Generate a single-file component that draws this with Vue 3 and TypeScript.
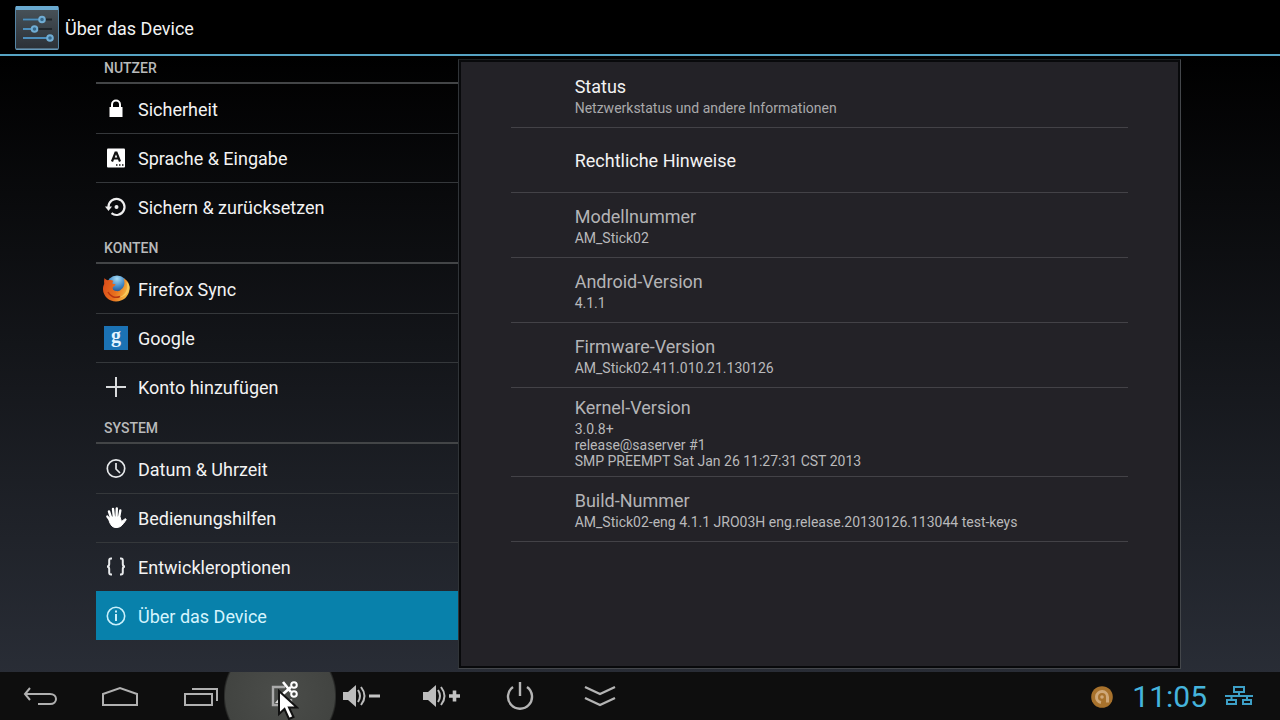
<script setup lang="ts">
import { ref } from 'vue'

interface Entry {
  id: string
  label: string
}

interface Section {
  title: string
  entries: Entry[]
}

interface Detail {
  title: string
  lines: string[]
  readonly: boolean
}

const sections: Section[] = [
  {
    title: 'NUTZER',
    entries: [
      { id: 'lock', label: 'Sicherheit' },
      { id: 'language', label: 'Sprache & Eingabe' },
      { id: 'backup', label: 'Sichern & zurücksetzen' },
    ],
  },
  {
    title: 'KONTEN',
    entries: [
      { id: 'firefox', label: 'Firefox Sync' },
      { id: 'google', label: 'Google' },
      { id: 'add', label: 'Konto hinzufügen' },
    ],
  },
  {
    title: 'SYSTEM',
    entries: [
      { id: 'clock', label: 'Datum & Uhrzeit' },
      { id: 'hand', label: 'Bedienungshilfen' },
      { id: 'braces', label: 'Entwickleroptionen' },
      { id: 'info', label: 'Über das Device' },
    ],
  },
]

const details: Detail[] = [
  { title: 'Status', lines: ['Netzwerkstatus und andere Informationen'], readonly: false },
  { title: 'Rechtliche Hinweise', lines: [], readonly: false },
  { title: 'Modellnummer', lines: ['AM_Stick02'], readonly: true },
  { title: 'Android-Version', lines: ['4.1.1'], readonly: true },
  { title: 'Firmware-Version', lines: ['AM_Stick02.411.010.21.130126'], readonly: true },
  {
    title: 'Kernel-Version',
    lines: ['3.0.8+', 'release@saserver #1', 'SMP PREEMPT Sat Jan 26 11:27:31 CST 2013'],
    readonly: true,
  },
  {
    title: 'Build-Nummer',
    lines: ['AM_Stick02-eng 4.1.1 JRO03H eng.release.20130126.113044 test-keys'],
    readonly: true,
  },
]

const selected = ref('info')
</script>

<template>
  <div class="screen">
    <header class="bar">
      <svg class="app-icon" viewBox="0 0 44 44" aria-hidden="true">
        <defs>
          <linearGradient id="tile" x1="0" y1="0" x2="0" y2="1">
            <stop offset="0" stop-color="#49545b" />
            <stop offset="1" stop-color="#2b3036" />
          </linearGradient>
        </defs>
        <rect x="0.5" y="0.5" width="43" height="43" rx="1" fill="url(#tile)" stroke="#5585a5" />
        <rect x="1" y="0" width="42" height="4" fill="#69a9cf" />
        <path d="M1 43h42" stroke="#76a9c9" />
        <g fill="none" stroke-width="2">
          <path d="M8 13.500h29M8 23h29M8 32h29" stroke="#20262b" />
          <path d="M8 13.500h17M8 23h9M8 32h25" stroke="#4d8fbd" />
        </g>
        <g fill="#35678a" stroke="#70add4" stroke-width="2">
          <circle cx="27" cy="13.500" r="2.800" />
          <circle cx="19.500" cy="23" r="2.800" />
          <circle cx="35" cy="32" r="2.800" />
        </g>
      </svg>
      <h1>Über das Device</h1>
    </header>

    <main class="content">
      <nav class="side" aria-label="Einstellungen">
        <section v-for="section in sections" :key="section.title">
          <h2>{{ section.title }}</h2>
          <ul>
            <li v-for="entry in section.entries" :key="entry.id">
              <button
                type="button"
                class="entry"
                :class="{ active: entry.id === selected }"
                @click="selected = entry.id"
              >
                <svg class="entry-icon" viewBox="0 0 28 28" aria-hidden="true">
                  <g v-if="entry.id === 'lock'">
                    <rect x="7.500" y="12" width="13" height="10" fill="#fff" />
                    <path d="M10 12.500V9.500a4 4 0 0 1 8 0v3" fill="none" stroke="#fff" stroke-width="2" />
                  </g>
                  <g v-else-if="entry.id === 'language'">
                    <rect x="5" y="4.500" width="18" height="19" rx="1" fill="#fff" />
                    <path d="M10 17.500l3.500-9h1l3.500 9M11.500 14.500h5" fill="none" stroke="#111" stroke-width="2.200" />
                    <path d="M14 21h1.500M17 21h1.500M20 21h1.500" stroke="#111" stroke-width="1.500" />
                  </g>
                  <g v-else-if="entry.id === 'backup'">
                    <path d="M6.500 14a8 8 0 1 1 3 6.200" fill="none" stroke="#eee" stroke-width="2.200" />
                    <path d="M3 13.500h7L6.500 18z" fill="#eee" />
                    <circle cx="14.500" cy="14" r="2" fill="#eee" />
                  </g>
                  <g v-else-if="entry.id === 'firefox'">
                    <defs>
                      <radialGradient id="globe" cx="0.5" cy="0.15" r="0.8">
                        <stop offset="0" stop-color="#a6dcf5" />
                        <stop offset="0.5" stop-color="#3f86c4" />
                        <stop offset="1" stop-color="#152a5c" />
                      </radialGradient>
                      <linearGradient id="fox" x1="0" y1="0" x2="1" y2="0.3">
                        <stop offset="0" stop-color="#d9481a" />
                        <stop offset="0.6" stop-color="#e8701d" />
                        <stop offset="1" stop-color="#f3b440" />
                      </linearGradient>
                    </defs>
                    <circle cx="15" cy="11" r="10.500" fill="url(#globe)" />
                    <path
                      d="M2.500 3c1 1.500 2 2 3.500 2.300 2-.8 4-.4 5.500.7-.8.800-1.200 1.700-1 2.700l3 .5c.2 1.200-1.500 2-2.700 2.800-.6 2 .6 3.700 3 4 2.700.3 4 .2 5.200-1.500 3-2 4.500-6 2.500-11 4.500 2 6.500 5.500 6 11-.6 7-6.500 12-13.500 12S1.200 21 1 14.500c-.1-2 .4-4 1.200-5.500-.3-2-.2-4 .3-6z"
                      fill="url(#fox)"
                    />
                    <path d="M24.500 7c2.500 7-1.500 14-9 16 7-.5 12-5.500 12-10.500 0-2.200-1.200-4.200-3-5.500z" fill="#f7ca5d" />
                    <path d="M6 17c2 4.500 7 6.500 12 4.500" fill="none" stroke="#b83612" stroke-width="1.500" />
                  </g>
                  <g v-else-if="entry.id === 'google'">
                    <rect x="2" y="2" width="24" height="24" fill="#1b72b4" />
                    <text class="letter" x="14" y="18" text-anchor="middle" fill="#e4f3ff">g</text>
                  </g>
                  <path
                    v-else-if="entry.id === 'add'"
                    d="M14 4v20M4 14h20"
                    stroke="#d8dadc"
                    stroke-width="2"
                  />
                  <g v-else-if="entry.id === 'clock'" fill="none" stroke="#e6e8ea" stroke-width="1.700">
                    <circle cx="14" cy="13.500" r="8.700" />
                    <path d="M14 8v6l4 4" />
                  </g>
                  <g v-else-if="entry.id === 'hand'" fill="none" stroke="#fff" stroke-linecap="round">
                    <path d="M9.500 15L7 7.500M12 14l-1-9M14.500 14l.3-9.500M17 14l1.300-7.500" stroke-width="2.400" />
                    <path d="M5.300 12.500l3 4" stroke-width="2.200" />
                    <path
                      d="M8.500 13h9.500l1.500 4.500 3.300-2.500c1-.6 1.700.200 1.200 1-1.500 2.200-3.500 5-5.500 6.500-2.700 1.500-6.500 1.500-8.500-.5-1.500-1.500-2.700-4-3-6z"
                      fill="#fff"
                      stroke-width="1"
                    />
                  </g>
                  <g v-else-if="entry.id === 'braces'" fill="none" stroke="#e8eaec" stroke-width="2">
                    <path d="M10 5.500H9q-1.800 0-1.800 2v3.500q0 2.500-2.200 2.500 2.200 0 2.200 2.500v3.500q0 2 1.800 2h1" />
                    <path d="M18 5.500h1q1.800 0 1.800 2v3.500q0 2.500 2.200 2.500-2.200 0-2.200 2.500v3.500q0 2-1.800 2h-1" />
                  </g>
                  <g v-else fill="none" stroke="#c9f0fb" stroke-width="1.600">
                    <circle cx="14" cy="14" r="8.700" />
                    <path d="M14 12v7M14 8.500v2" stroke-width="2" />
                  </g>
                </svg>
                <span>{{ entry.label }}</span>
              </button>
            </li>
          </ul>
        </section>
      </nav>

      <div class="panel-slot">
        <article class="panel">
          <div
            v-for="item in details"
            :key="item.title"
            class="detail"
            :class="{ readonly: item.readonly }"
          >
            <h3>{{ item.title }}</h3>
            <p v-for="line in item.lines" :key="line">{{ line }}</p>
          </div>
        </article>
      </div>
    </main>

    <footer class="system">
      <div class="keys">
        <button type="button" aria-label="Zurück">
          <svg viewBox="0 0 48 48">
            <path d="M14 16l-5 6 5 6M9 22h25c8 0 8 10 0 10H22" fill="none" stroke="#b0b0b0" stroke-width="2" />
          </svg>
        </button>
        <button type="button" aria-label="Startseite">
          <svg viewBox="0 0 48 48">
            <path d="M7 33V22l17-6 17 6v11z" fill="none" stroke="#b0b0b0" stroke-width="2" />
          </svg>
        </button>
        <button type="button" aria-label="Letzte Apps">
          <svg viewBox="0 0 48 48">
            <path d="M9 22h27v11H9zM16 17h25v12" fill="none" stroke="#b0b0b0" stroke-width="2" />
          </svg>
        </button>
        <button type="button" class="pressed" aria-label="Bildschirmfoto">
          <svg viewBox="0 0 48 48">
            <path d="M29 15H17v18h18v-6" fill="none" stroke="#aaa" stroke-width="2.400" />
            <path d="M19 31l6-7 8 7z" fill="#ddd" />
            <g fill="none" stroke="#fff" stroke-width="2">
              <path d="M27 10l8 10M27 22l8-7" stroke-width="2.600" />
              <circle cx="38" cy="13" r="2.800" />
              <circle cx="38" cy="22" r="2.800" />
            </g>
          </svg>
          <svg class="pointer" viewBox="0 0 22 32" aria-hidden="true">
            <path d="M2 2v23l5.500-5 4.500 10 4.500-2-4.500-9.500h8z" fill="#fff" stroke="#111" stroke-width="2" />
          </svg>
        </button>
        <button type="button" aria-label="Leiser">
          <svg viewBox="0 0 48 48">
            <path d="M7 20h5l8-7v22l-8-7H7z" fill="#bcbcbc" />
            <path d="M22 18q4 6 0 12M25 15q7 9 0 18" fill="none" stroke="#bcbcbc" stroke-width="2" />
            <path d="M33 24h11" stroke="#c4c4c4" stroke-width="3" />
          </svg>
        </button>
        <button type="button" aria-label="Lauter">
          <svg viewBox="0 0 48 48">
            <path d="M7 20h5l8-7v22l-8-7H7z" fill="#bcbcbc" />
            <path d="M22 18q4 6 0 12M25 15q7 9 0 18" fill="none" stroke="#bcbcbc" stroke-width="2" />
            <path d="M33 24h11M38.500 18.500v11" stroke="#c4c4c4" stroke-width="3.600" />
          </svg>
        </button>
        <button type="button" aria-label="Ausschalten">
          <svg viewBox="0 0 48 48">
            <path d="M17 15a12 12 0 1 0 14 0" fill="none" stroke="#b4b4b4" stroke-width="2.400" />
            <path d="M24 10v14" stroke="#b4b4b4" stroke-width="2.400" />
          </svg>
        </button>
        <button type="button" aria-label="Leiste ausblenden">
          <svg viewBox="0 0 48 48">
            <path d="M9 15l15 7 15-7M9 26l15 7 15-7" fill="none" stroke="#b4b4b4" stroke-width="2.400" />
          </svg>
        </button>
      </div>
      <div class="tray">
        <svg class="badge" viewBox="0 0 24 24" aria-hidden="true">
          <circle cx="12" cy="13" r="10.800" fill="#a8722c" />
          <path d="M11 18.500A5.500 5.500 0 1 1 17.500 13v5.500" fill="none" stroke="#cfa878" stroke-width="3" />
          <circle cx="12" cy="13" r="1.800" fill="#cfa878" />
        </svg>
        <time>11:05</time>
        <svg class="net" viewBox="0 0 28 20" aria-hidden="true">
          <g fill="none" stroke="#3d9fc6" stroke-width="2">
            <path d="M9 1h10v5H9zM2 14h9v4H2zM18 14h8v4h-8zM0 10h28M14 6v4M6.500 10v4M22 10v4" />
          </g>
        </svg>
      </div>
    </footer>
  </div>
</template>

<style>
body {
  margin: 0;
  background: #000;
}
</style>

<style scoped>
.screen {
  display: flex;
  flex-direction: column;
  min-height: 100vh;
  font-family: Roboto, "Noto Sans", sans-serif;
  color: #f3f3f3;
  background: linear-gradient(#000 0, #000 56px, #292d36 94%);
}

h1,
h2,
h3,
p,
ul {
  margin: 0;
  padding: 0;
  font-weight: 400;
  list-style: none;
}

button {
  margin: 0;
  padding: 0;
  border: 0;
  background: none;
  font: inherit;
  color: inherit;
}

.bar {
  display: flex;
  align-items: center;
  gap: 6px;
  box-sizing: border-box;
  height: 56px;
  padding: 2px 0 0 15px;
  background: #000;
  border-bottom: 2px solid #56a3c3;
}

.app-icon {
  width: 44px;
  height: 44px;
}

.bar h1 {
  padding-top: 2px;
  font-size: 18px;
  line-height: 24px;
}

.content {
  display: flex;
  flex: 1;
  padding: 0 96px;
}

.side {
  flex: 1;
  min-width: 0;
}

.side h2 {
  display: flex;
  align-items: center;
  box-sizing: border-box;
  height: 33px;
  padding: 2px 0 0 8px;
  border-bottom: 2px solid #434547;
  font-size: 14px;
  font-weight: 500;
  color: #b9babb;
}

.side section:first-child h2 {
  height: 28px;
  padding-top: 0;
  padding-bottom: 2px;
}

.entry {
  display: flex;
  align-items: center;
  gap: 8px;
  box-sizing: border-box;
  width: 100%;
  height: 49px;
  padding: 0 6px;
  border-top: 1px solid transparent;
  font-size: 18px;
  text-align: left;
}

li + li .entry {
  border-top-color: #35383b;
}

li .entry.active {
  border-top-color: #0881ab;
  background: #0881ab;
  color: #d5f4fd;
}

.entry-icon {
  flex: none;
  width: 28px;
  height: 28px;
}

.letter {
  font-family: "Liberation Serif", serif;
  font-size: 20px;
  font-weight: 700;
}

.panel-slot {
  display: flex;
  flex: 2;
  min-width: 0;
  padding: 3px 3px 3px 0;
}

.panel {
  flex: 1;
  min-width: 0;
  padding: 3px 52px;
  border: 1px solid #44474b;
  border-top-color: #1c2022;
  border-left-color: #303438;
  background: #232227;
  box-shadow: inset 0 0 0 2px #08090b;
}

.detail {
  display: flex;
  flex-direction: column;
  justify-content: center;
  box-sizing: border-box;
  min-height: 65px;
  padding: 8px 0 7px 64px;
  border-bottom: 1px solid #434247;
}

.detail h3 {
  font-size: 18px;
  line-height: 24px;
}

.detail p {
  font-size: 14px;
  line-height: 16px;
  color: #a9a9ab;
}

.detail h3 + p {
  margin-top: 1px;
}

.detail.readonly {
  color: #b4b4b6;
}

.detail.readonly p {
  color: #b9b9bb;
}

.system {
  display: flex;
  align-items: center;
  justify-content: space-between;
  height: 48px;
  background: #0e0e0e;
}

.keys {
  display: flex;
}

.keys button {
  position: relative;
  display: grid;
  place-items: center;
  width: 80px;
  height: 48px;
}

.keys svg {
  width: 48px;
  height: 48px;
}

.keys .pressed::before {
  content: "";
  position: absolute;
  inset: 0 -16px;
  background: radial-gradient(circle 58px at 50% 50%, #4b4d4a 0, #424441 94%, transparent 98%);
}

.keys .pressed svg {
  position: relative;
}

.keys .pressed .pointer {
  position: absolute;
  left: 37px;
  top: 17px;
  width: 22px;
  height: 32px;
}

.tray {
  display: flex;
  align-items: center;
  gap: 18px;
  padding-right: 27px;
}

.tray time {
  padding-top: 2px;
  font-size: 30px;
  line-height: 46px;
  color: #45b4dc;
}

.badge {
  width: 24px;
  height: 24px;
}

.net {
  width: 28px;
  height: 20px;
}
</style>
